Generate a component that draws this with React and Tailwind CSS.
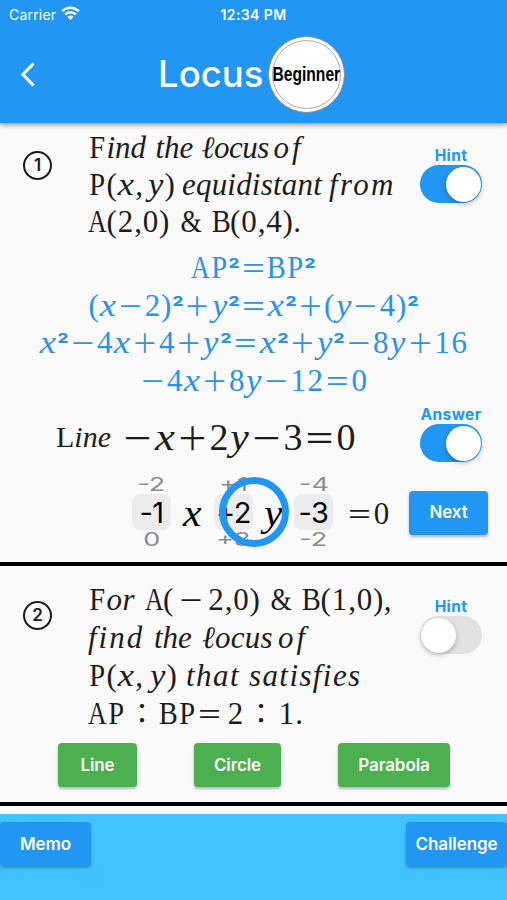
import React, { useState } from 'react';

const SERIF = "font-['Liberation_Serif',serif]";

// Every character of a formula sits in a cell of its own width
const CELLS = {
    op: "w-[27px] text-[26px] font-normal leading-[0] font-['Noto_Sans_CJK_JP',sans-serif]",
    colon: "w-[34px] text-[28px] leading-[0] font-['Noto_Sans_CJK_JP',sans-serif]",
    sup: "w-[12px] text-[24px] font-semibold leading-[0] scale-x-110 font-['Inter',sans-serif]",
    x: 'w-[18px] italic scale-x-[1.18]',
    y: 'w-[17.5px] italic scale-x-110',
    digit: 'w-[17px]',
    letter: 'w-[18.5px] scale-x-[0.92]',
    wide: 'w-[18.5px] scale-x-[0.83]',
    paren: 'w-[10.5px]',
    comma: 'w-[8px]',
    space: 'w-[10px]',
    amp: 'w-[22px] scale-x-[0.88]',
};

const LARGE_CELLS = {
    ...CELLS,
    op: "w-[33px] text-[32px] font-normal leading-[0] font-['Noto_Sans_CJK_JP',sans-serif]",
    x: 'w-[22px] italic scale-x-[1.18]',
    y: 'w-[21px] italic scale-x-110',
    digit: 'w-[20px]',
};

const kindOf = (ch) => {
    if ('＋－＝'.includes(ch)) return 'op';
    if (ch === '：') return 'colon';
    if (ch === '²') return 'sup';
    if (ch === 'x') return 'x';
    if (ch === 'y') return 'y';
    if (ch >= '0' && ch <= '9') return 'digit';
    if (ch === '(' || ch === ')') return 'paren';
    if (ch === ',' || ch === '.') return 'comma';
    if (ch === ' ') return 'space';
    if (ch === '&') return 'amp';
    if (ch === 'A') return 'wide';
    return 'letter';
};

const Formula = ({ text, large = false }) => {
    const cells = large ? LARGE_CELLS : CELLS;
    return (
        <span className="flex items-baseline">
            {[...text].map((ch, i) => (
                <span key={i} className={`flex shrink-0 justify-center whitespace-pre ${cells[kindOf(ch)]}`}>
                    {ch}
                </span>
            ))}
        </span>
    );
};

const Word = ({ children, className }) => (
    <span className={`shrink-0 whitespace-nowrap italic ${className}`}>{children}</span>
);

const Line = ({ children, className = 'h-[37px] leading-[37px]' }) => (
    <div className={`flex items-baseline ${className}`}>{children}</div>
);

const NumberBadge = ({ children }) => (
    <div className="flex h-[29px] w-[29px] items-center justify-center rounded-full border-2 border-[#1c1c1c] text-[17px] font-semibold leading-none text-[#1c1c1c]">
        {children}
    </div>
);

const Toggle = ({ label, on, onChange }) => (
    <div className="flex w-[62px] flex-col items-center">
        <span className="h-[18px] text-[15.5px] font-bold leading-[18px] tracking-[0.4px] text-[#2196f3]">{label}</span>
        <button
            onClick={() => onChange(!on)}
            className={`flex h-[38px] w-[62px] items-center rounded-full p-[1px] ${on ? 'justify-end bg-[#2196f3]' : 'justify-start bg-[#e1e1e1]'}`}
        >
            <span className="h-[35px] w-[35px] rounded-full bg-white shadow-[0_2px_5px_rgba(0,0,0,0.25)]"></span>
        </button>
    </div>
);

const Button = ({ children, className }) => (
    <button
        className={`flex h-[44px] items-center justify-center rounded-[4px] pt-[1px] text-[17px] font-semibold tracking-[-0.1px] text-white shadow-[0_2px_3px_rgba(0,0,0,0.28)] ${className}`}
    >
        {children}
    </button>
);

const Picker = ({ prev, value, next }) => (
    <div className="flex w-[39px] flex-col items-center">
        <span className="h-[18px] scale-x-150 text-[18px] leading-[18px] text-[#8c8c8c]">{prev}</span>
        <span className="flex h-[36px] w-[39px] items-center justify-center rounded-[8px] bg-[#ececec] pt-[1px] text-[29px] leading-none tracking-[-0.5px] text-black">
            {value}
        </span>
        <span className="h-[20px] scale-x-150 text-[18px] leading-[20px] text-[#8c8c8c]">{next}</span>
    </div>
);

const Header = () => (
    <header className="relative z-10 h-[123px] bg-[#2196f3] text-white shadow-[0_2px_5px_rgba(0,0,0,0.4)]">
        <div className="grid h-[28px] grid-cols-3 items-center">
            <div className="flex items-center gap-[5px] pl-[9px]">
                <span className="text-[14px] tracking-[0.2px]">Carrier</span>
                <svg className="mb-[3px] h-[14px] w-[19px]" viewBox="0 0 19 14" fill="none">
                    <path d="M1.2 5.2C5.9 .6 13.1 .6 17.8 5.2" stroke="white" strokeWidth="2.5" />
                    <path d="M4.2 8.4C7.2 5.5 11.8 5.5 14.8 8.4" stroke="white" strokeWidth="2.5" />
                    <path d="M6.5 10.8C8.3 9.2 10.7 9.2 12.5 10.8L9.5 13.9Z" fill="white" />
                </svg>
            </div>
            <span className="text-center text-[14px] font-semibold tracking-[0.4px]">12:34 PM</span>
        </div>
        <div className="flex h-[92px] items-center">
            <svg className="ml-[20px] h-[26px] w-[16px]" viewBox="0 0 16 26" fill="none">
                <path d="M13.5 2.5L3 13.5L13.5 24.5" stroke="white" strokeWidth="3.2" />
            </svg>
            <h1 className="ml-[122px] w-[110px] pt-[1px] text-[36.5px] font-medium leading-none">Locus</h1>
            <div className="flex h-[77px] w-[77px] items-center justify-center rounded-full border border-[#8a8a8a] bg-white p-[3px]">
                <div className="flex h-full w-full items-center justify-center rounded-full border border-[#a8a8a8]">
                    <span className="scale-x-[0.78] font-['Liberation_Sans',sans-serif] text-[20px] font-bold text-black">Beginner</span>
                </div>
            </div>
        </div>
    </header>
);

const App = () => {
    const [hint1, setHint1] = useState(true);
    const [answer, setAnswer] = useState(true);
    const [hint2, setHint2] = useState(false);

    return (
        <div className="h-[900px] w-[507px] overflow-hidden bg-[#fafafa] font-['Inter',sans-serif]">
            <Header />

            {/* Problem 1 */}
            <section className="h-[443px] border-b-4 border-black">
                <div className="flex h-[126px] pt-[6px]">
                    <div className="ml-[23px] mt-[22px]">
                        <NumberBadge>1</NumberBadge>
                    </div>
                    <div className={`ml-[36px] w-[332px] text-[31px] text-[#1c1c1c] ${SERIF}`}>
                        <Line>
                            <Formula text="F" />
                            <Word className="w-[49px]">ind</Word>
                            <Word className="w-[46px]">the</Word>
                            <Word className="w-[72px] tracking-[-0.5px]">ℓocus</Word>
                            <Word className="tracking-[3px]">of</Word>
                        </Line>
                        <Line>
                            <Formula text="P(x," />
                            <span className="w-[4px]"></span>
                            <Formula text="y)" />
                            <Word className="ml-[7px] w-[147px] tracking-[0.2px]">equidistant</Word>
                            <Word className="tracking-[2.3px]">from</Word>
                        </Line>
                        <Line>
                            <Formula text="A(2,0) & B(0,4)." />
                        </Line>
                    </div>
                    <div className="mt-[18px]">
                        <Toggle label="Hint" on={hint1} onChange={setHint1} />
                    </div>
                </div>

                <div className={`flex h-[150px] flex-col items-center text-[31px] text-[#2a93e6] ${SERIF}`}>
                    {['AP²＝BP²', '(x－2)²＋y²＝x²＋(y－4)²', 'x²－4x＋4＋y²＝x²＋y²－8y＋16', '－4x＋8y－12＝0'].map((step) => (
                        <Line key={step} className="h-[37.5px] leading-[37.5px]">
                            <Formula text={step} />
                        </Line>
                    ))}
                </div>

                <div className="flex h-[76px]">
                    <div className={`ml-[56px] mt-[15px] flex h-[44px] w-[364px] items-start text-[#1c1c1c] ${SERIF}`}>
                        <div className="flex w-[65px] text-[30px] leading-[46px]">
                            <span>L</span>
                            <span className="italic">ine</span>
                        </div>
                        <div className="flex h-[44px] text-[38px] leading-[46px]">
                            <Formula text="－x＋2y－3＝0" large />
                        </div>
                    </div>
                    <div className="mt-[7px]">
                        <Toggle label="Answer" on={answer} onChange={setAnswer} />
                    </div>
                </div>

                <div className="relative flex h-[74px] items-center pl-[132px] pt-[2px]">
                    <Picker prev="-2" value="-1" next="0" />
                    <span className={`ml-[12px] w-[31px] origin-left scale-x-110 text-[38px] italic leading-[44px] ${SERIF}`}>x</span>
                    <Picker prev="+1" value="+2" next="+3" />
                    <span className={`ml-[11px] w-[30px] origin-left scale-x-110 text-[38px] italic leading-[44px] ${SERIF}`}>y</span>
                    <Picker prev="-4" value="-3" next="-2" />
                    <div className={`ml-[13px] flex w-[63px] text-[31px] leading-[37px] text-[#1c1c1c] ${SERIF}`}>
                        <Formula text="＝0" />
                    </div>
                    <div className="pb-[1px]">
                        <Button className="w-[79px] bg-[#2196f3]">Next</Button>
                    </div>
                    {/* tap marker over the second picker */}
                    <div className="absolute left-[219px] top-[2px] h-[70px] w-[70px] rounded-full border-[7px] border-[#2196f3]"></div>
                </div>
            </section>

            {/* Problem 2 */}
            <section className="h-[240px] border-b-4 border-black">
                <div className="flex h-[177px] pt-[15px]">
                    <div className="ml-[23px] mt-[20px]">
                        <NumberBadge>2</NumberBadge>
                    </div>
                    <div className={`ml-[36px] w-[332px] text-[31px] text-[#1c1c1c] ${SERIF}`}>
                        <Line className="h-[38px] leading-[38px]">
                            <Formula text="F" />
                            <Word className="w-[38px] tracking-[0.5px]">or</Word>
                            <Formula text="A(" />
                            <span className="w-[4px]"></span>
                            <Formula text="－" />
                            <span className="w-[3px]"></span>
                            <Formula text="2,0) & B(1,0)," />
                        </Line>
                        <Line className="h-[38px] leading-[38px]">
                            <Word className="w-[66px] tracking-[2px]">find</Word>
                            <Word className="w-[48px]">the</Word>
                            <Word className="w-[76px] tracking-[0.2px]">ℓocus</Word>
                            <Word className="tracking-[3px]">of</Word>
                        </Line>
                        <Line className="h-[38px] leading-[38px]">
                            <Formula text="P(x," />
                            <span className="w-[6px]"></span>
                            <Formula text="y)" />
                            <Word className="ml-[9px] w-[63px] tracking-[1.5px]">that</Word>
                            <Word className="tracking-[1.4px]">satisfies</Word>
                        </Line>
                        <Line className="h-[38px] leading-[38px]">
                            <Formula text="AP：BP＝" />
                            <span className="w-[4px]"></span>
                            <Formula text="2：1." />
                        </Line>
                    </div>
                    <div className="mt-[17px]">
                        <Toggle label="Hint" on={hint2} onChange={setHint2} />
                    </div>
                </div>
                <div className="flex pl-[58px]">
                    <Button className="w-[79px] bg-[#4caf50]">Line</Button>
                    <Button className="ml-[57px] w-[87px] bg-[#4caf50]">Circle</Button>
                    <Button className="ml-[57px] w-[112px] bg-[#4caf50]">Parabola</Button>
                </div>
            </section>

            <div className="h-[8px] bg-white"></div>
            <footer className="flex h-[86px] justify-between bg-[#40c4ff] pt-[8px]">
                <Button className="w-[91px] bg-[#2196f3]">Memo</Button>
                <Button className="w-[101px] bg-[#2196f3]">Challenge</Button>
            </footer>
        </div>
    );
};

export default App;
